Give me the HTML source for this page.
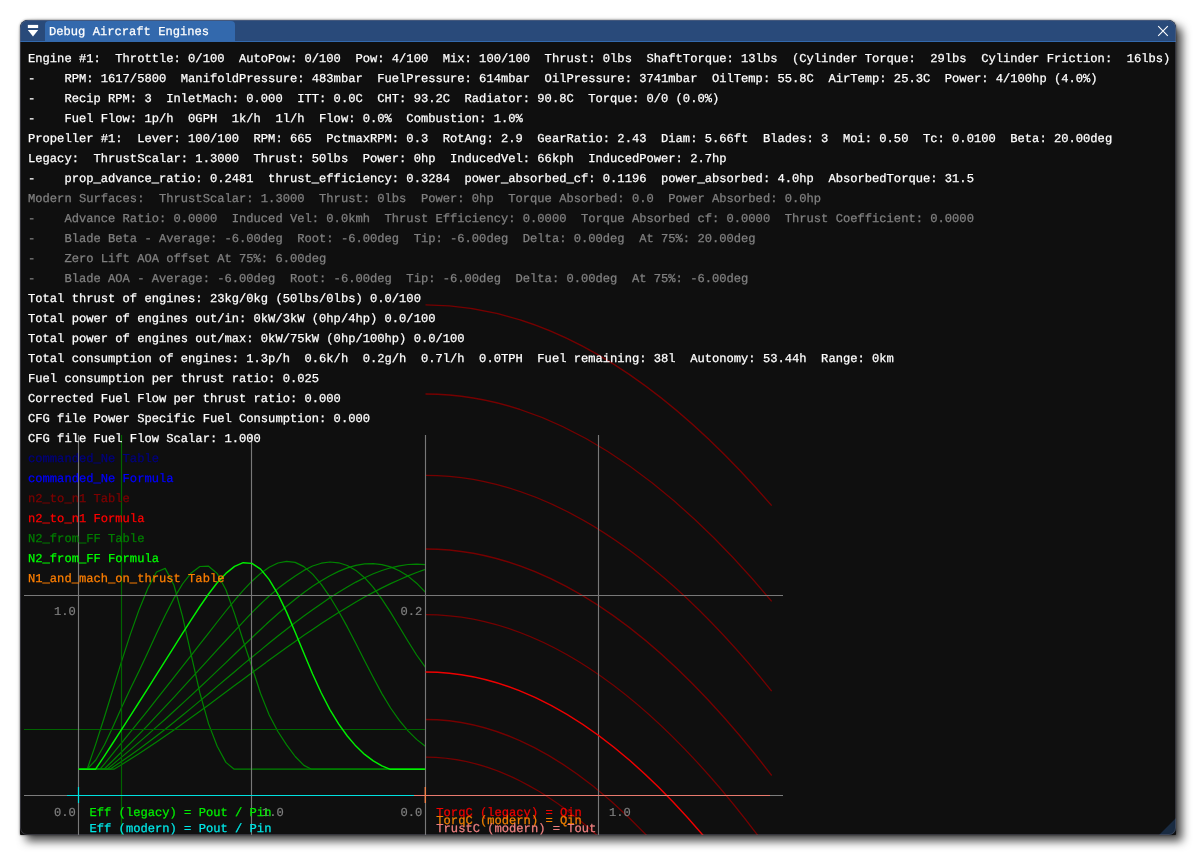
<!DOCTYPE html>
<html lang="en"><head><meta charset="utf-8"><title>Debug Aircraft Engines</title>
<style>
html,body{margin:0;padding:0;background:#fff;}
body{width:1196px;height:855px;position:relative;overflow:hidden;font-family:"Liberation Mono","DejaVu Sans Mono",monospace;font-size:12.13px;text-rendering:geometricPrecision;-webkit-font-smoothing:antialiased;}
#win{will-change:transform;position:absolute;left:20px;top:20px;width:1156px;height:815px;background:#0f0f0f;border-radius:8px 8px 1px 1px;box-shadow:6px 6px 10px rgba(0,0,0,.72),0 0 2.5px rgba(0,0,0,.6);overflow:hidden;}
#title{position:absolute;left:0;top:0;width:1156px;height:21px;background:#294a7a;}
#title:after{content:"";position:absolute;left:0;top:21px;width:1156px;height:1px;background:#3369ad;}
#tab{position:absolute;left:25px;top:1px;width:190px;height:21px;background:#3369ad;border-radius:4px 4px 0 0;}
#tab span{position:absolute;left:4px;top:1.4px;line-height:21px;-webkit-text-stroke:0.25px;color:#fff;white-space:pre;}
#ico{position:absolute;left:0;top:0;}
#txt{position:absolute;left:8px;top:29.3px;margin:0;-webkit-text-stroke:0.25px;}
#txt div{height:20px;line-height:20px;white-space:pre;color:#fff;}
#txt .g{color:#808080}
#txt .db{color:#00007f}#txt .b{color:#0000ff}#txt .dr{color:#7f0000}#txt .r{color:#ff0000}
#txt .dg{color:#007f00}#txt .gr{color:#00ff00}#txt .o{color:#ff7f00}
#graph{position:absolute;left:0;top:0;}
#graph text{font-family:"Liberation Mono","DejaVu Sans Mono",monospace;font-size:12.13px;}
#bord{position:absolute;left:0;top:0;width:1156px;height:815px;box-sizing:border-box;border:1px solid rgba(110,110,128,.4);border-radius:8px 8px 7px 7px;pointer-events:none;}
#gripc{position:absolute;right:0;bottom:0;width:17px;height:17px;overflow:hidden;border-radius:0 0 7px 0;}
#grip{position:absolute;right:0;bottom:0;width:0;height:0;border-style:solid;border-width:0 0 17px 17px;border-color:transparent transparent #192b42 transparent;}
</style></head><body>
<div id="win">
<svg id="graph" width="1156" height="815" viewBox="20 20 1156 815" fill="none" stroke-linecap="butt" stroke-linejoin="round"><path d="M425.5 304.8 Q598.6 304.8 771.7 505.6" stroke="#760000" stroke-width="1.3"/><path d="M425.5 394.0 Q598.6 394.0 771.7 601.3" stroke="#760000" stroke-width="1.3"/><path d="M425.5 475.4 Q598.6 475.4 771.7 691.1" stroke="#760000" stroke-width="1.3"/><path d="M425.5 549.0 Q598.6 549.0 771.7 775.5" stroke="#760000" stroke-width="1.3"/><path d="M425.5 614.6 Q598.6 614.6 771.7 854.3" stroke="#760000" stroke-width="1.3"/><path d="M425.5 719.5 Q598.6 719.5 771.7 1003.6" stroke="#760000" stroke-width="1.3"/><path d="M425.5 757.2 Q598.6 757.2 771.7 1074.8" stroke="#760000" stroke-width="1.3"/><path d="M78.5 769.2 L87.2 769.2 L87.2 769.2L95.8 743.9L104.5 716.7L113.2 688.6L121.8 660.6L130.5 633.9L139.2 609.4L147.9 588.2L156.5 572.0L165.2 568.4L173.9 585.0L182.5 616.4L191.2 654.8L199.9 693.0L208.6 723.9L217.2 746.2L225.9 762.4L234.2 769.2L425.3 769.2" stroke="#008400" stroke-width="1.2"/><path d="M78.5 769.2 L87.2 769.2 L87.2 769.2L95.8 760.0L104.5 744.8L113.2 726.3L121.8 707.0L130.5 688.6L139.2 670.7L147.9 652.2L156.5 633.4L165.2 615.2L173.9 598.4L182.5 584.0L191.2 572.9L199.9 566.5L208.6 566.2L217.2 573.5L225.9 589.8L234.6 613.9L243.2 640.7L251.9 666.8L260.6 693.5L269.2 715.0L277.9 731.5L286.6 744.8L295.2 756.5L303.9 765.4L311.5 769.2L425.3 769.2" stroke="#008400" stroke-width="1.2"/><path d="M78.5 769.2 L100.0 769.2 L100.0 769.2L104.5 763.8L113.2 753.2L121.8 742.6L130.5 731.9L139.2 721.1L147.9 710.3L156.5 699.4L165.2 688.4L173.9 677.4L182.5 666.4L191.2 655.3L199.9 644.2L208.6 633.1L217.2 622.0L225.9 611.0L234.6 600.3L243.2 590.3L251.9 581.2L260.6 573.4L269.2 567.2L277.9 563.0L286.6 561.3L295.2 562.4L303.9 566.6L312.6 574.1L321.3 584.3L329.9 596.8L338.6 611.2L347.3 626.9L355.9 643.6L364.6 660.7L373.3 677.6L381.9 693.6L390.6 708.0L399.3 720.4L408.0 730.8L416.6 739.4L425.3 746.3" stroke="#008400" stroke-width="1.2"/><path d="M78.5 769.2 L104.0 769.2 L104.0 769.2L113.2 760.3L121.8 751.8L130.5 743.0L139.2 734.1L147.9 725.1L156.5 715.9L165.2 706.6L173.9 697.3L182.5 687.9L191.2 678.4L199.9 668.9L208.6 659.4L217.2 649.9L225.9 640.5L234.6 631.1L243.2 621.8L251.9 612.7L260.6 604.0L269.2 596.0L277.9 588.6L286.6 582.0L295.2 575.9L303.9 570.4L312.6 566.0L321.3 563.2L329.9 562.0L338.6 562.8L347.3 565.5L355.9 570.4L364.6 577.7L373.3 587.4L381.9 599.1L390.6 612.4L399.3 626.7L408.0 641.2L416.6 655.0L425.3 667.2" stroke="#008400" stroke-width="1.2"/><path d="M78.5 769.2 L107.0 769.2 L107.0 769.2L113.2 764.1L121.8 756.9L130.5 749.6L139.2 742.1L147.9 734.6L156.5 726.9L165.2 719.2L173.9 711.3L182.5 703.4L191.2 695.4L199.9 687.3L208.6 679.1L217.2 670.9L225.9 662.6L234.6 654.3L243.2 646.0L251.9 637.7L260.6 629.5L269.2 621.5L277.9 613.7L286.6 606.3L295.2 599.2L303.9 592.5L312.6 586.3L321.3 580.7L329.9 575.7L338.6 571.4L347.3 567.9L355.9 565.4L364.6 563.9L373.3 563.6L381.9 564.6L390.6 566.9L399.3 570.7L408.0 576.1L416.6 583.2L425.3 592.1" stroke="#008400" stroke-width="1.2"/><path d="M78.5 769.2 L110.0 769.2 L110.0 769.2L113.2 767.1L121.8 761.3L130.5 755.3L139.2 749.1L147.9 742.6L156.5 736.0L165.2 729.2L173.9 722.3L182.5 715.3L191.2 708.1L199.9 700.9L208.6 693.7L217.2 686.4L225.9 679.0L234.6 671.7L243.2 664.4L251.9 657.2L260.6 650.1L269.2 643.0L277.9 636.0L286.6 629.2L295.2 622.5L303.9 616.1L312.6 609.8L321.3 603.7L329.9 597.8L338.6 592.3L347.3 587.0L355.9 582.1L364.6 577.7L373.3 573.8L381.9 570.5L390.6 567.8L399.3 565.8L408.0 564.5L416.6 564.1L425.3 564.7" stroke="#008400" stroke-width="1.2"/><path d="M78.5 769.2 L113.9 769.2 L113.9 769.2L121.8 764.4L130.5 759.0L139.2 753.5L147.9 747.8L156.5 742.0L165.2 736.0L173.9 730.0L182.5 723.8L191.2 717.6L199.9 711.3L208.6 704.9L217.2 698.5L225.9 692.1L234.6 685.6L243.2 679.2L251.9 672.8L260.6 666.4L269.2 660.0L277.9 653.7L286.6 647.5L295.2 641.4L303.9 635.3L312.6 629.4L321.3 623.6L329.9 618.0L338.6 612.5L347.3 607.2L355.9 602.0L364.6 597.1L373.3 592.4L381.9 587.9L390.6 583.6L399.3 579.7L408.0 575.9L416.6 572.5L425.3 569.4" stroke="#008400" stroke-width="1.2"/><path d="M24 729.5H425M121.5 435V835" stroke="#006400" stroke-width="1.2"/><path d="M24 595.5H783M78.5 435V835M251.5 435V835M425.5 435V835M598.5 435V835" stroke="#787878" stroke-width="1.15"/><path d="M24 795.5H67M770 795.5H783" stroke="#7c7c7c" stroke-width="1"/><path d="M78.5 769.2 L95.6 769.2L104.5 755.8L113.2 742.5L121.8 729.2L130.5 715.6L139.2 702.0L147.9 688.4L156.5 674.6L165.2 660.9L173.9 647.2L182.5 633.4L191.2 619.8L199.9 606.5L208.6 594.0L217.2 582.8L225.9 573.4L234.6 566.4L243.2 562.7L251.9 563.4L260.6 569.1L269.2 579.6L277.9 594.1L286.6 612.1L295.2 632.2L303.9 653.3L312.6 674.0L321.3 693.0L329.9 709.6L338.6 723.9L347.3 736.0L355.9 746.1L364.6 754.4L373.3 760.9L381.9 765.9L389.8 769.2L425.3 769.2" stroke="#00f000" stroke-width="1.45"/><path d="M425.5 672.0 Q598.6 672.0 771.7 926.1" stroke="#f00000" stroke-width="1.45"/><path d="M67 795.5H414M78.5 787V803" stroke="#00e0e0" stroke-width="1.2"/><path d="M414 795.5H770" stroke="#e87a6e" stroke-width="1.2"/><path d="M425.3 787V803" stroke="#f08048" stroke-width="1.4"/><g fill="#808080" stroke="#808080" stroke-width="0.2"><text x="54" y="615">1.0</text><text x="400.5" y="615">0.2</text><text x="54" y="816">0.0</text><text x="262" y="816">1.0</text><text x="400.5" y="816">0.0</text><text x="609" y="816">1.0</text></g><g stroke-width="0.25"><text x="89.5" y="816" fill="#00f000" stroke="#00f000">Eff (legacy) = Pout / Pin</text><text x="89.5" y="831.6" fill="#00e8e8" stroke="#00e8e8">Eff (modern) = Pout / Pin</text><text x="436.3" y="816" fill="#f00000" stroke="#f00000">TorqC (legacy) = Qin</text><text x="436.3" y="824" fill="#f08000" stroke="#f08000">TorqC (modern) = Qin</text><text x="436.3" y="831.8" fill="#f08080" stroke="#f08080">TrustC (modern) = Tout</text></g></svg>
<div id="txt">
<div class="w">Engine #1:  Throttle: 0/100  AutoPow: 0/100  Pow: 4/100  Mix: 100/100  Thrust: 0lbs  ShaftTorque: 13lbs  (Cylinder Torque:  29lbs  Cylinder Friction:  16lbs)</div>
<div class="w">-    RPM: 1617/5800  ManifoldPressure: 483mbar  FuelPressure: 614mbar  OilPressure: 3741mbar  OilTemp: 55.8C  AirTemp: 25.3C  Power: 4/100hp (4.0%)</div>
<div class="w">-    Recip RPM: 3  InletMach: 0.000  ITT: 0.0C  CHT: 93.2C  Radiator: 90.8C  Torque: 0/0 (0.0%)</div>
<div class="w">-    Fuel Flow: 1p/h  0GPH  1k/h  1l/h  Flow: 0.0%  Combustion: 1.0%</div>
<div class="w">Propeller #1:  Lever: 100/100  RPM: 665  PctmaxRPM: 0.3  RotAng: 2.9  GearRatio: 2.43  Diam: 5.66ft  Blades: 3  Moi: 0.50  Tc: 0.0100  Beta: 20.00deg</div>
<div class="w">Legacy:  ThrustScalar: 1.3000  Thrust: 50lbs  Power: 0hp  InducedVel: 66kph  InducedPower: 2.7hp</div>
<div class="w">-    prop_advance_ratio: 0.2481  thrust_efficiency: 0.3284  power_absorbed_cf: 0.1196  power_absorbed: 4.0hp  AbsorbedTorque: 31.5</div>
<div class="g">Modern Surfaces:  ThrustScalar: 1.3000  Thrust: 0lbs  Power: 0hp  Torque Absorbed: 0.0  Power Absorbed: 0.0hp</div>
<div class="g">-    Advance Ratio: 0.0000  Induced Vel: 0.0kmh  Thrust Efficiency: 0.0000  Torque Absorbed cf: 0.0000  Thrust Coefficient: 0.0000</div>
<div class="g">-    Blade Beta - Average: -6.00deg  Root: -6.00deg  Tip: -6.00deg  Delta: 0.00deg  At 75%: 20.00deg</div>
<div class="g">-    Zero Lift AOA offset At 75%: 6.00deg</div>
<div class="g">-    Blade AOA - Average: -6.00deg  Root: -6.00deg  Tip: -6.00deg  Delta: 0.00deg  At 75%: -6.00deg</div>
<div class="w">Total thrust of engines: 23kg/0kg (50lbs/0lbs) 0.0/100</div>
<div class="w">Total power of engines out/in: 0kW/3kW (0hp/4hp) 0.0/100</div>
<div class="w">Total power of engines out/max: 0kW/75kW (0hp/100hp) 0.0/100</div>
<div class="w">Total consumption of engines: 1.3p/h  0.6k/h  0.2g/h  0.7l/h  0.0TPH  Fuel remaining: 38l  Autonomy: 53.44h  Range: 0km</div>
<div class="w">Fuel consumption per thrust ratio: 0.025</div>
<div class="w">Corrected Fuel Flow per thrust ratio: 0.000</div>
<div class="w">CFG file Power Specific Fuel Consumption: 0.000</div>
<div class="w">CFG file Fuel Flow Scalar: 1.000</div>
<div class="db">commanded_Ne Table</div>
<div class="b">commanded_Ne Formula</div>
<div class="dr">n2_to_n1 Table</div>
<div class="r">n2_to_n1 Formula</div>
<div class="dg">N2_from_FF Table</div>
<div class="gr">N2_from_FF Formula</div>
<div class="o">N1_and_mach_on_thrust Table</div>
</div>
<div id="title"><div id="tab"><span>Debug Aircraft Engines</span></div>
<svg id="ico" width="1156" height="22" viewBox="0 0 1156 22"><rect x="7.85" y="4.9" width="10.3" height="3.15" fill="#fff"/><path d="M7.85 9.95h10.3L13 16.4z" fill="#fff"/><path d="M1138.2 6.2l9.6 9.6m0-9.6l-9.6 9.6" stroke="#fff" stroke-width="1.1" fill="none"/></svg>
</div>
<div id="gripc"><div id="grip"></div></div>
<div id="bord"></div>
</div>
</body></html>
